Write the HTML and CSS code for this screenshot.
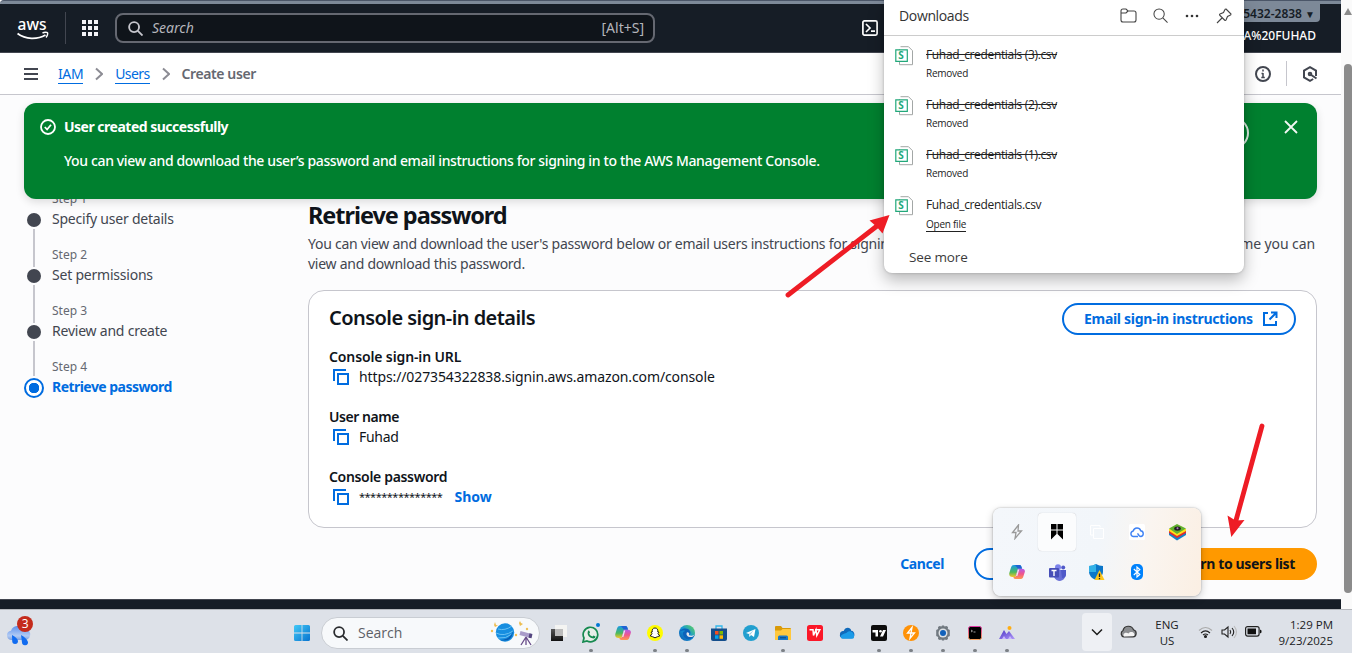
FILE: index.html
```html
<!DOCTYPE html>
<html lang="en">
<head>
<meta charset="utf-8">
<title>Create user | IAM</title>
<link rel="stylesheet" href="styles.css">
</head>
<body>
<svg class="defs" width="0" height="0">
  <defs>
    <symbol id="copy" viewBox="0 0 16 16"><path d="M1 12V1h12" /><path d="M5 5h10v10H5z"/></symbol>
    <symbol id="sheet" viewBox="0 0 19 20">
      <path d="M5.500 .7h8l4 4v14H4.500V3" fill="#fff" stroke="#a3a7a6"/><path d="M.8 3.800h11.500v11.500H.8z" fill="#fff" stroke="#21a87a" stroke-width="1.200"/>
      <text x="3.300" y="13.200" class="sheet-letter">S</text>
    </symbol>
    <symbol id="glass" viewBox="0 0 16 16"><circle cx="6.500" cy="6.500" r="5.300"/><path d="m10.500 10.500 5 5"/></symbol>
    <symbol id="chev" viewBox="0 0 8 14"><path d="m1 1.500 6 5.500-6 5.500"/></symbol>
    <linearGradient id="rainB" x1="0" y1="0" x2="0" y2="1"><stop offset="0" stop-color="#1798e8"/><stop offset=".6" stop-color="#4cba5c"/><stop offset="1" stop-color="#f6c52b"/></linearGradient>
    <linearGradient id="rainC" x1="0" y1="0" x2="0" y2="1"><stop offset="0" stop-color="#b45bea"/><stop offset=".5" stop-color="#f0568c"/><stop offset="1" stop-color="#ff9950"/></linearGradient>
    <linearGradient id="edgeG" x1="0" y1="1" x2="1" y2="0"><stop offset="0" stop-color="#0a55ab"/><stop offset=".5" stop-color="#1596d8"/><stop offset="1" stop-color="#66d94f"/></linearGradient>
    <linearGradient id="winG" x1="0" y1="0" x2="1" y2="1"><stop offset="0" stop-color="#42c9f7"/><stop offset="1" stop-color="#0873cf"/></linearGradient>
    <linearGradient id="cloudG" x1="0" y1="0" x2="0" y2="1"><stop offset="0" stop-color="#5f92ee"/><stop offset=".7" stop-color="#b3cbf3"/><stop offset="1" stop-color="#7b9fe0"/></linearGradient>
    <linearGradient id="termG" x1="0" y1="0" x2="0" y2="1"><stop offset="0" stop-color="#df37a3"/><stop offset="1" stop-color="#f8a05b"/></linearGradient>
    <linearGradient id="mtnG" x1="0" y1="0" x2="1" y2="1"><stop offset="0" stop-color="#4b35c6"/><stop offset="1" stop-color="#b199f8"/></linearGradient>
    <linearGradient id="darkG" x1="0" y1="0" x2="0" y2="1"><stop offset="0" stop-color="#555"/><stop offset="1" stop-color="#111"/></linearGradient>
    <symbol id="copilot" viewBox="0 0 16 16">
      <path d="M5 1h5.500c1.200 0 1.700.8 2 2l.5 1.800H9L6.500 13H3.500C1 13 -.2 11.500.3 9L2 3.500C2.500 1.800 3.600 1 5 1z" fill="url(#rainB)"/>
      <path d="M6 1h4.500c1.200 0 1.700.8 2 2l.5 1.800H9z" fill="#1f62d4"/>
      <path d="M9 4.800h4c2.500 0 3.200 1.500 2.800 3.200l-1.600 5c-.5 1.500-1.500 2-2.900 2H6.500c-1.600 0-2.200-1-2-2h2z" fill="url(#rainC)"/>
      <path d="M9 5.500h1.300l-2 6.500H7.100z" fill="#e9edf5"/>
    </symbol>
  </defs>
</svg>

<div class="screen">
  <div class="browser">
    <div class="page">
      <div class="accent-strip"></div>
      <header class="topnav">
        <svg class="aws" width="32" height="40" viewBox="0 -10 32 40"><text x="0.500" y="12" class="aws-word" textLength="29" lengthAdjust="spacingAndGlyphs">aws</text><path d="M.5 15.500c8 6.200 20 6.200 28 1.500" fill="none" stroke="#fff" stroke-width="1.900"/><path d="M25.500 15c2-1 4.500-.8 5-.2s0 3-1.500 4.700" fill="none" stroke="#fff" stroke-width="1.400"/></svg>
        <i class="nav-divider"></i>
        <svg class="apps" width="16" height="16" viewBox="0 0 16 16" fill="#f3f3f7"><path d="M0 0h4v4H0zM6 0h4v4H6zM12 0h4v4h-4zM0 6h4v4H0zM6 6h4v4H6zM12 6h4v4h-4zM0 12h4v4H0zM6 12h4v4H6zM12 12h4v4h-4z"/></svg>
        <div class="nav-search">
          <svg width="15" height="15" fill="none" stroke="#c6c6cd" stroke-width="2"><use href="#glass"/></svg>
          <em>Search</em><span>[Alt+S]</span>
        </div>
        <svg class="shell" width="16" height="16" viewBox="0 0 16 16" fill="none" stroke="#fff" stroke-width="1.700"><rect x=".9" y=".9" width="14.200" height="14.200" rx="1.500"/><path d="m4 4 4 4-4 4M9 11.200h4"/></svg>
        <div class="account"><div class="account-id">5432-2838 <small>▼</small></div><div class="account-name">A%20FUHAD</div></div>
      </header>
      <nav class="crumbs">
        <svg class="burger" width="14" height="12" viewBox="0 0 14 12" stroke="#424650" stroke-width="2"><path d="M0 1h14M0 6h14M0 11h14"/></svg>
        <a class="crumb-iam">IAM</a>
        <svg class="sep" width="8" height="14"><use href="#chev"/></svg>
        <a class="crumb-users">Users</a>
        <svg class="sep" width="8" height="14"><use href="#chev"/></svg>
        <b>Create user</b>
        <div class="crumb-tools">
          <svg width="16" height="16" viewBox="0 0 16 16" fill="none" stroke="#424650" stroke-width="2"><circle cx="8" cy="8" r="7"/><path d="M8 3.500v2M8 7v5M6.500 7.500H8M6.300 11.500h3.500" stroke-width="1.500"/></svg>
          <i></i>
          <svg width="16" height="16" viewBox="0 0 16 16" fill="none" stroke="#424650" stroke-width="2"><path d="M14 10V4.500L8 1.200 2 4.500v7l6 3.300 3.200-1.800"/><circle cx="8" cy="8" r="1.300"/><path d="m8.500 8.500 6 4"/></svg>
        </div>
      </nav>
      <main class="content">
        <ol class="steps">
          <li><i class="dot"></i><small>Step 1</small><span>Specify user details</span></li>
          <li><i class="dot"></i><small>Step 2</small><span>Set permissions</span></li>
          <li><i class="dot"></i><small>Step 3</small><span>Review and create</span></li>
          <li class="active"><i class="dot"></i><small>Step 4</small><span>Retrieve password</span></li>
        </ol>
        <section class="detail">
          <h1>Retrieve password</h1>
          <div class="lead"><div class="lead-row"><span>You can view and download the user's password below or email users instructions for signing in to the AWS Console.</span><span class="lead-end">time you can</span></div><div class="lead-two">view and download this password.</div></div>
          <div class="card">
            <div class="card-head"><h2>Console sign-in details</h2>
              <a class="btn email"><span>Email sign-in instructions</span><svg width="16" height="16" viewBox="0 0 16 16" fill="none" stroke="#006ce0" stroke-width="2"><path d="M6 2H2v12h12v-4M9 1.500h5.500V7M14 2 7.500 8.500"/></svg></a>
            </div>
            <div class="field"><b class="k-url">Console sign-in URL</b><p><svg class="copy"><use href="#copy"/></svg><span class="v-url">https://027354322838.signin.aws.amazon.com/console</span></p></div>
            <div class="field"><b class="k-user">User name</b><p><svg class="copy"><use href="#copy"/></svg><span class="v-user">Fuhad</span></p></div>
            <div class="field"><b class="k-pass">Console password</b><p><svg class="copy"><use href="#copy"/></svg><span class="v-pass">***************</span><a class="show">Show</a></p></div>
          </div>
          <div class="actions"><a class="cancel">Cancel</a><a class="btn secondary"></a><a class="btn primary">Return to users list</a></div>
        </section>
      </main>
      <footer class="console-foot"></footer>

      <div class="flash">
        <svg width="16" height="16" viewBox="0 0 16 16" fill="none" stroke="#fff" stroke-width="1.800"><circle cx="8" cy="8" r="7"/><path d="m4.800 8 2.300 2.500L11 5.800"/></svg>
        <div><b>User created successfully</b><p>You can view and download the user’s password and email instructions for signing in to the AWS Management Console.</p></div>
        <i class="flash-btn"></i>
        <svg class="close" width="14" height="14" viewBox="0 0 14 14" stroke="#f2f8f4" stroke-width="1.800"><path d="m1 1 12 12M13 1 1 13"/></svg>
      </div>
    </div>
    <div class="scrollbar"><i class="up"></i><i class="thumb"></i></div>
  </div>

  <div class="taskbar">
    <div class="weather"><svg width="28" height="32" viewBox="0 0 28 32"><path d="M5 24a4.700 4.700 0 0 1 0-9.300 7 7 0 0 1 12.500-1.500A4.500 4.500 0 0 1 20 24z" fill="url(#cloudG)"/><path d="M6 19q5.500 3 6 6a2.900 2.900 0 0 1-5.800 0zM15 19q5.500 3 7 7a3 3 0 0 1-6 .5z" fill="#126cf0"/><circle cx="19" cy="8" r="8" fill="#c42b1c"/><text x="15.800" y="12.200" class="badge-num">3</text></svg></div>
    <div class="task-mid">
      <div class="app"><svg width="16" height="16" viewBox="0 0 16 16" fill="url(#winG)"><path d="M1.500 0h6.100v7.600H0V1.500Q0 0 1.500 0zM8.400 0h6.100Q16 0 16 1.500v6.100H8.400zM0 8.400h7.600V16H1.500Q0 16 0 14.500zM8.400 8.400H16v6.100q0 1.500-1.500 1.500H8.400z"/></svg></div>
      <div class="tb-search"><svg width="15" height="15" fill="none" stroke="#292b2e" stroke-width="1.900"><use href="#glass"/></svg><span>Search</span>
        <svg width="44" height="28" viewBox="0 0 44 28"><circle cx="15" cy="13.500" r="9.200" fill="#168ee0"/><path d="M8 10q7 2 14-3M6 14q8 4 17-2M8 19q8 1 14-4" stroke="#69c1f3" fill="none"/><path d="M10 21q10 0 13-9-1 12-13 9" fill="#075bb3"/><path d="m5 3 1 3 2 .5-3 1.500-1-2zM30 2l1 2 2 1-3 2-1-3z" fill="#edbd4f"/><circle cx="2" cy="12" r="1.200" fill="#efbf55"/><circle cx="37" cy="10" r="1.200" fill="#efbf55"/><circle cx="26" cy="16" r="1.200" fill="#efbf55"/><path d="m30 14 11 3" stroke="#a99bc9" stroke-width="4"/><path d="m39 16.500 3 .6" stroke="#554680" stroke-width="4.500"/><path d="m36 18-5 8M36 18l5 8M36 18v8" stroke="#684b88" stroke-width="1.300"/></svg></div>
      <div class="app"><svg width="16" height="16" viewBox="0 0 16 16"><path d="M4 0h12v12H4z" fill="#f4f4f2"/><path d="M0 4h12v12H0z" fill="url(#darkG)"/><path d="M4 4h8v7H4z" fill="#bbb"/></svg></div>
      <div class="app on"><svg width="18" height="20" viewBox="0 -3 18 20"><path d="m1 16 1-4a7.300 7.300 0 1 1 3 3z" fill="#e8eee9" stroke="#168a50" stroke-width="1.700"/><path d="M6 5c1-1 1.500 0 2 1.500L7.200 7.700Q8 10 10.500 10.500l1-1 2 1c0 2-2 2.500-4 1.500C6 10.500 5 8 6 5z" fill="#168a50"/><circle cx="16" cy="-1" r="2" fill="#0078d4"/></svg></div>
      <div class="app"><svg width="16" height="16"><use href="#copilot"/></svg></div>
      <div class="app on"><svg width="16" height="16" viewBox="0 0 16 16"><circle cx="8" cy="8" r="8" fill="#fffc00"/><path d="M8 3c2.200 0 3 1.500 2.800 4l1.200.2-1 1.200q.8 2 2 2.300l-2.500 1L8 12.800l-2.500-1.100-2.500-1q1.200-.3 2-2.300L4 7.200 5.200 7C5 4.500 5.800 3 8 3z" fill="#fff" stroke="#222"/></svg></div>
      <div class="app on"><svg width="16" height="16" viewBox="0 0 16 16"><circle cx="8" cy="8" r="8" fill="url(#edgeG)"/><path d="M0 8c1-5 9-6 11-2 1 2 0 4-1 4 1 2 4 1.500 6-.5-3 7-11 6-12 0C3.500 7 5 6 6.500 6 4 5 1 5.500 0 8z" fill="#0b62ba"/><path d="M8 7.200c-1.500 2.500.5 5 4 4.800 1.500 0 2.500-.6 3.500-2C13 11 10 11 10 9.500c.8-1-.2-2.300-2-2.300z" fill="#dfe4eb"/></svg></div>
      <div class="app"><svg width="16" height="16" viewBox="0 0 16 16"><path d="M5 4V1h6v3" fill="none" stroke="#32b7eb" stroke-width="1.300"/><path d="M0 3.500h16V14q0 2-2 2H2q-2 0-2-2z" fill="#154e8c"/><path d="M4 6h3.500v3.500H4z" fill="#f25022"/><path d="M8.500 6H12v3.500H8.500z" fill="#7fba00"/><path d="M4 10.300h3.500v3.500H4z" fill="#00a4ef"/><path d="M8.500 10.300H12v3.500H8.500z" fill="#ffb900"/></svg></div>
      <div class="app"><svg width="16" height="16" viewBox="0 0 16 16"><circle cx="8" cy="8" r="8" fill="#229fcf"/><path d="m3 8 9.500-4L11 12l-3-2-1.500 2L6 9z" fill="#fff"/><path d="m6 9 5-4-4 5z" fill="#9bcce2"/></svg></div>
      <div class="app on"><svg width="16" height="16" viewBox="0 0 16 16"><path d="M0 2q0-1 1-1h5l1.500 2H15q1 0 1 1v5H0z" fill="#d99a08"/><path d="M0 5.500h6l1.500-1.500H16v11H0z" fill="#ffc83d"/><path d="M3 15v-3q0-1.500 1.500-1.500h7Q13 10.500 13 12v3z" fill="#1878c9"/><path d="M5 12.800h6" stroke="#07457d"/></svg></div>
      <div class="app"><svg width="16" height="16" viewBox="0 0 16 16"><rect width="16" height="16" rx="2.500" fill="#fb1728"/><path d="M2.500 4.800H6L6.500 10.500 9 4.800l.8 5.700L12.800 4.800H8" fill="none" stroke="#fff" stroke-width="1.500"/></svg></div>
      <div class="app"><svg width="16" height="12" viewBox="0 0 17 12"><path d="M1 8C1 4 4 4 5 4c1-4 7-5 8-.5 4 0 5 8 0 8H4C2 11.500.5 10 1 8z" fill="#0f69ba"/><path d="M2 10c0-3 5-3 7-5s7 0 7 4-1 3-5 3H4c-2 0-2-1-2-2z" fill="#1b9be8"/></svg></div>
      <div class="app on"><svg width="16" height="16" viewBox="0 0 16 16"><rect width="16" height="16" rx="2" fill="#0d0d0d"/><path d="M1.500 5H7v6.500H4.500V7.500h-3zM12 5h3l-3 6.500H9z" fill="#fff"/><circle cx="9.500" cy="6.300" r="1.300" fill="#fff"/></svg></div>
      <div class="app on"><svg width="16" height="16" viewBox="0 0 16 16"><circle cx="8" cy="8" r="8" fill="#ff9207"/><path d="M9 2.500 4.500 8H8l-1 5.500L11.500 8H8z" fill="none" stroke="#fff" stroke-width="1.300"/></svg></div>
      <div class="app on"><svg width="16" height="16" viewBox="0 0 16 16"><path d="m4.500 1 2 .5.500-1h2l.5 1 2-.5 1.500 1-.2 2 2 1v6l-2 1 .2 2-1.500 1-2-.5-.5 1H7l-.5-1-2 .5-1.500-1 .2-2-2-1V5l2-1L3 2z" fill="#717980"/><circle cx="8" cy="8" r="4.500" fill="#dde1e5"/><circle cx="8" cy="8" r="3" fill="#1261ba"/></svg></div>
      <div class="app on"><svg width="14" height="14" viewBox="0 0 14 14"><rect x=".5" y=".5" width="13" height="13" rx="2" fill="#000" stroke="url(#termG)"/><path d="m3 4 1.500 1L3 6M5.500 6h2" stroke="#ddd" fill="none" stroke-width=".7"/></svg></div>
      <div class="app on"><svg width="16" height="16" viewBox="0 0 16 16"><path d="M0 14 5 5l2.500 4L10 6l6 8z" fill="url(#mtnG)"/><path d="m3 14 2-3 2 3zM9 14l2-3 2 3z" fill="#c8b8ff"/><circle cx="10.500" cy="3" r="2" fill="#ffad13"/></svg></div>
    </div>
    <div class="sys">
      <div class="chev-btn"><svg width="12" height="8" viewBox="0 0 12 8" fill="none" stroke="#1c1c1c" stroke-width="1.500"><path d="m1 1.500 5 5 5-5"/></svg></div>
      <svg class="cloud" width="17" height="13" viewBox="0 0 17 13"><path d="M4 12a3.500 3.500 0 0 1-1-6.500 5.500 5.500 0 0 1 10.500-.7A3.700 3.700 0 0 1 13 12z" fill="#8b8d90" stroke="#333" stroke-width="1.200"/><path d="M4 11.500c-2-3 2-5 4.500-3C11 5 16 8 14 11z" fill="#f4f4f4"/></svg>
      <div class="lang"><span>ENG</span><span>US</span></div>
      <svg class="wifi" width="15" height="12" viewBox="0 0 15 12" fill="none" stroke="#222" stroke-width="1.100"><path d="M1 4.500q6.500-6 13 0" stroke="#aaa"/><path d="M3 7q4.500-4.200 9 0M5 9q2.500-2 5 0"/><circle cx="7.500" cy="10.500" r="1" fill="#222"/></svg>
      <svg class="sound" width="17" height="14" viewBox="0 0 17 14" fill="none" stroke="#222" stroke-width="1.100"><path d="M1 5h2.500L7 2v10L3.500 9H1zM9 5q1.500 2 0 4M11 3q3.500 4 0 8"/><path d="M13 1q5 6 0 12" stroke="#bbb"/></svg>
      <svg class="battery" width="17" height="11" viewBox="0 0 17 11"><rect x=".6" y=".6" width="13.500" height="9.500" rx="2" fill="none" stroke="#222" stroke-width="1.200"/><path d="M2.500 2.500h8.500v5.700H2.500zM15 3.500l1.500 1v2l-1.500 1z" fill="#111"/></svg>
      <div class="clock"><span>1:29 PM</span><span class="date">9/23/2025</span></div>
    </div>
  </div>

  <aside class="downloads">
    <div class="dl-head"><span>Downloads</span>
      <svg class="folder" width="17" height="15" viewBox="0 0 17 15"><path d="M1 3q0-2 2-2h3l2 2h6q2 0 2 2v7q0 2-2 2H3q-2 0-2-2zM1 5h5l2-2"/></svg>
      <svg class="dl-find" width="15" height="15" viewBox="0 0 16 16"><circle cx="6.500" cy="6.500" r="5.500"/><path d="m10.500 10.500 5 5"/></svg>
      <svg class="more" width="14" height="4" viewBox="0 0 14 4"><g fill="#333" stroke="none"><circle cx="2" cy="2" r="1.300"/><circle cx="7" cy="2" r="1.300"/><circle cx="12" cy="2" r="1.300"/></g></svg>
      <svg class="pin" width="16" height="16" viewBox="0 0 16 16"><path d="m10 1 5 5q0 1-1 1.300L11.500 8.500 10 12q-.5 1-1.500 0L4 7.500q-1-1 0-1.500l3.500-1.500L8.700 2q.3-1 1.300-1zM6 10 1 15"/></svg>
    </div>
    <div class="dl-item"><svg width="19" height="20"><use href="#sheet"/></svg><div><s>Fuhad_credentials (3).csv</s><small>Removed</small></div></div>
    <div class="dl-item"><svg width="19" height="20"><use href="#sheet"/></svg><div><s>Fuhad_credentials (2).csv</s><small>Removed</small></div></div>
    <div class="dl-item"><svg width="19" height="20"><use href="#sheet"/></svg><div><s>Fuhad_credentials (1).csv</s><small>Removed</small></div></div>
    <div class="dl-item"><svg width="19" height="20"><use href="#sheet"/></svg><div><span>Fuhad_credentials.csv</span><small class="open">Open file</small></div></div>
    <div class="see-more">See more</div>
  </aside>

  <div class="tray">
    <div><svg width="12" height="16" viewBox="0 0 12 16" fill="none" stroke="#999" stroke-width="1.300"><path d="M7.500 1 1.500 8.500H5L4 14.500 10.500 7H7z"/></svg></div>
    <div><p class="tile"><svg width="12" height="16" viewBox="0 0 12 16"><path d="M0 0h5.500v5.500H0zM6.500 0H12v5.500H6.500zM0 6.500h5.500V10L0 15.500zM6.500 6.500H12v9L6.500 10z"/></svg></p></div>
    <div><svg width="14" height="14" viewBox="0 0 14 14" fill="none" stroke="#fff"><path d="M.5 10V.5H10v2M3.500 3.500h10v10h-10zM.5 10h3"/></svg></div>
    <div><svg width="16" height="16" viewBox="0 0 16 16"><rect width="16" height="16" rx="1.500" fill="#fff"/><path d="M9 12.500H4.200a2.800 2.800 0 0 1 0-5.500 3.900 3.900 0 0 1 7.500-.2 2.900 2.900 0 0 1 .3 5.700q-1.200 0-2-1L8.500 9.300" fill="none" stroke="#3f82f4" stroke-width="1.400"/></svg></div>
    <div><svg width="17" height="17" viewBox="0 0 17 17"><path d="m0 11 8 5.500 9-5.500V8H0z" fill="#1681c9"/><path d="m0 9 8 5 9-5V7H0z" fill="#e22b2f"/><path d="m0 7 8 5 9-5V5H0z" fill="#ffe11a"/><path d="M0 4.500 8 0l9 4.500-9 5.500z" fill="#65b32e"/><ellipse cx="8.500" cy="4.600" rx="3.300" ry="2.200" fill="#222"/><circle cx="8.500" cy="4.300" r="1" fill="#b474c5"/></svg></div>
    <div><svg width="16" height="16"><use href="#copilot"/></svg></div>
    <div><svg width="17" height="17" viewBox="0 0 17 17"><circle cx="9" cy="3.200" r="3" fill="#7b83eb"/><circle cx="14.200" cy="3.500" r="2" fill="#5059c9"/><path d="M5 6h11v6q0 4-5 5-4 0-6-4z" fill="#6970d6"/><path d="M12 6h5v5q0 3-4 3z" fill="#505ac9"/><rect x="0" y="4" width="10" height="9.500" rx="1" fill="#464eb8"/><path d="M2.500 6.500h5M5 6.500V12" stroke="#fff" stroke-width="1.400"/></svg></div>
    <div><svg width="16" height="17" viewBox="0 0 16 17"><path d="M7 0q3 2 7 2v6q0 5-7 8-7-3-7-8V2q4 0 7-2z" fill="#0b76c9"/><path d="M7 0v8H0V2q4 0 7-2z" fill="#31b1e7"/><path d="m10.500 6 5 10h-10z" fill="#ffc619"/><path d="M10.500 9.500v3.500M10.500 14v1.300" stroke="#222" stroke-width="1.300"/></svg></div>
    <div><svg width="12" height="16" viewBox="0 0 12 16"><rect width="12" height="16" rx="5" fill="#0082fc"/><path d="m2.800 5 6 5.500L6 13V3l2.800 2.500-6 5.500" fill="none" stroke="#fff" stroke-width="1.200"/></svg></div>
  </div>

  <svg class="arrows" width="1352" height="653" viewBox="0 0 1352 653">
    <g stroke="#ee1c25" stroke-width="4.800" stroke-linecap="round"><path d="m788 295 89-69M1262 426l-27 98"/></g>
    <path d="m889.500 215-20 5.500 7 6 6 7zM1231.300 537l-3.800-21.500 8 5 9-.5z" fill="#ee1c25"/>
  </svg>
</div>
</body>
</html>
```
FILE: styles.css
```css
* { box-sizing: border-box; }
body { margin: 0; font-family: "Noto Sans", "Open Sans", sans-serif; font-size: 14px; line-height: 20px; color: #0f141a; }
p, h1, h2, ol { margin: 0; padding: 0; }
ol { list-style: none; }
svg { display: block; flex: none; }
b, h1, h2 { font-weight: 600; }
.defs { position: absolute; }
.screen { position: relative; width: 1352px; height: 653px; overflow: hidden; display: flex; flex-direction: column; white-space: nowrap; background: #fff; }
.browser { height: 609px; display: flex; }
.page { position: relative; width: 1341px; display: flex; flex-direction: column; background: #fcfcfd; }

.accent-strip { height: 4px; background: #7d8998; border-top: 1px solid #4b5668; border-top-left-radius: 5px; }
.topnav { height: 49px; background: #161d26; border-bottom: 1px solid #424650; display: flex; align-items: center; padding-left: 17px; }
.aws-word { font: 500 17px "Noto Sans", sans-serif; fill: #fff; }
.nav-divider { width: 1px; height: 32px; background: #424650; margin-left: 16px; }
.apps { margin-left: 16px; }
.nav-search { width: 540px; height: 30px; margin-left: 17px; border: 2px solid #656871; border-radius: 8px; background: #0f141a; display: flex; align-items: center; padding: 0 9px 0 11px; color: #b4b4bb; }
.nav-search em { margin-left: 9px; flex: 1; }
.shell { margin-left: 207px; }
.account { margin-left: auto; align-self: stretch; width: 99px; margin-right: 20px; text-align: right; color: #fff; font-size: 12px; }
.account-id { height: 18px; line-height: 19px; background: #7d8998; color: #161d26; border-radius: 0 0 4px 4px; padding-right: 5px; font-weight: 600; margin-right: 1px; }
.account-id small { font-size: 10px; }
.account-name { padding: 4px 5px 0 0; font-weight: 500; }

.crumbs { height: 42px; border-bottom: 1px solid #c6c6cd; background: #fff; display: flex; align-items: center; padding-left: 24px; }
.crumbs a { color: #006ce0; border-bottom: 1px solid #006ce0; line-height: 18px; margin-top: 2px; }
.crumb-iam { margin-left: 20px; letter-spacing: -.4px; }
.crumb-users { letter-spacing: -.6px; }
.sep { margin: 0 12px; fill: none; stroke: #8c8c94; stroke-width: 2; }
.crumbs b { color: #656871; letter-spacing: -.4px; }
.crumb-tools { display: flex; align-items: center; gap: 15px; margin: 0 23px 0 auto; }
.crumb-tools i { width: 1px; height: 25px; background: #c6c6cd; }

.content { display: flex; height: 504px; padding: 94px 24px 0; }
.steps { width: 284px; }
.steps li { position: relative; height: 56px; padding-left: 28px; color: #424650; }
.steps small, .steps span { display: block; }
.steps small { font-size: 12px; color: #656871; }
.steps span { letter-spacing: -.22px; }
.steps .dot { position: absolute; left: 3px; top: 24px; width: 14px; height: 14px; border-radius: 50%; background: #424650; }
.steps .dot::after { content: ""; position: absolute; left: 6px; top: 16px; width: 2px; height: 38px; background: #c6c6cd; }
.steps li:nth-child(3) .dot::after { height: 35px; }
.steps .active .dot { left: 0; top: 21px; width: 20px; height: 20px; background: radial-gradient(#006ce0 5px, #fff 5.500px); border: 2px solid #006ce0; }
.steps .active .dot::after { display: none; }
.steps .active span { color: #006ce0; font-weight: 700; letter-spacing: -.54px; }
.detail { flex: 1; }
h1 { font-size: 23.500px; line-height: 30px; margin-top: 11px; letter-spacing: -.8px; font-weight: 700; letter-spacing: -1.050px; }
.lead { color: #424650; margin-top: 4px; letter-spacing: -.26px; }
.lead-row { display: flex; }
.lead-end { margin-left: auto; padding-right: 2px; letter-spacing: -.1px; }
.card { margin-top: 16px; height: 238px; border: 1px solid #c6c6cd; border-radius: 16px; background: #fff; padding: 12px 20px; }
.card-head { display: flex; justify-content: space-between; height: 32px; }
h2 { font-size: 20px; line-height: 30px; letter-spacing: -.55px; }
.btn { height: 32px; border-radius: 16px; border: 2px solid #006ce0; color: #006ce0; font-weight: 700; letter-spacing: -.3px; display: flex; align-items: center; }
.email { width: 234px; padding: 0 16px 0 20px; justify-content: space-between; }
.field { margin-top: 12px; height: 48px; }
.field b, .field p { display: flex; align-items: center; height: 20px; }
.k-url { letter-spacing: -.12px; }
.k-user { letter-spacing: -.45px; }
.k-pass { letter-spacing: -.33px; }
.v-url { letter-spacing: -.11px; }
.v-user { letter-spacing: -.3px; }
.v-pass { font-size: 11px; letter-spacing: -.5px; }
.copy { width: 16px; height: 16px; margin: 0 10px 0 4px; fill: none; stroke: #006ce0; stroke-width: 2; }
.show { color: #006ce0; font-weight: 700; margin-left: 12px; }
.actions { display: flex; align-items: center; justify-content: flex-end; margin-top: 20px; color: #006ce0; font-weight: 700; }
.cancel { margin-right: 30px; letter-spacing: -.4px; }
.secondary { width: 160px; background: #fff; }
.primary { width: 175px; margin-left: 8px; background: #f90; border-color: #f90; color: #0f141a; justify-content: flex-end; padding-right: 20px; letter-spacing: -.35px; }
.console-foot { height: 10px; background: #161d26; border-top: 1px solid #424650; }

/* The notification floats over the scrolled page */
.flash { position: absolute; left: 24px; top: 103px; width: 1293px; height: 96px; border-radius: 12px; background: #00802f; color: #fff; display: flex; padding: 14px 16px; box-shadow: 0 3px 8px #0002; }
.flash svg { margin-top: 2px; }
.flash div { margin-left: 8px; flex: 1; }
.flash b { display: block; font-weight: 700; letter-spacing: -.5px; }
.flash p { margin-top: 14px; font-weight: 500; letter-spacing: -.365px; }
.flash-btn { width: 80px; height: 32px; border: 2px solid #dcebe1; border-radius: 16px; margin-right: 35px; }
.flash .close { margin: 3px 3px 0 0; }

.scrollbar { width: 11px; background: #fafafa; padding: 8px 0 0 3px; }
.scrollbar i { display: block; }
.up { border: 4px solid transparent; border-bottom: 7px solid #8b8b8b; border-top: 0; width: 8px; }
.thumb { width: 8px; height: 529px; margin-top: 49px; background: #8b8b8b; border-radius: 4px; }

.taskbar { height: 44px; background: #dde1e8; border-top: 1px solid #b4b7bc; display: flex; font-family: "Open Sans", "Noto Sans", sans-serif; color: #202124; }
.weather { width: 286px; padding: 6px 0 0 6px; }
.badge-num { font: 12px "Open Sans", sans-serif; fill: #fff; }
.task-mid { display: flex; width: 738px; }
.app { position: relative; width: 32px; height: 46px; display: flex; align-items: center; justify-content: center; }
.app.on::after { content: ""; position: absolute; left: 14px; top: 39px; width: 4px; height: 3px; border-radius: 2px; background: #7c8086; }
.tb-search { width: 219px; height: 32px; margin: 7px 3px 0; border-radius: 16px; border: 1px solid #c9cdd3; background: #f7f9fb; display: flex; align-items: center; padding: 0 5px 0 11px; color: #5d6066; }
.tb-search span { margin-left: 10px; flex: 1; }
.sys { display: flex; align-items: center; margin-left: 58px; width: 270px; font-size: 12px; }
.chev-btn { width: 30px; height: 38px; border-radius: 4px; background: #eef0f4; display: flex; align-items: center; justify-content: center; }
.cloud { margin-left: 8px; }
.lang { width: 40px; margin-left: 10px; text-align: center; padding-top: 2px; }
.lang span, .clock span { display: block; line-height: 16px; font-size: 11.500px; }
.wifi { margin-left: 11px; }
.sound { margin-left: 8px; }
.battery { margin-left: 7px; }
.clock { margin-left: auto; margin-right: 19px; text-align: right; padding-top: 2px; }

/* Browser downloads flyout */
.downloads { position: absolute; left: 884px; top: 0; width: 360px; height: 273px; background: #fff; border-radius: 0 0 8px 8px; box-shadow: 0 7px 16px #0004, 0 0 3px #0003; font-family: "Open Sans", "Noto Sans", sans-serif; color: #222; }
.dl-head { height: 36px; border-bottom: 1px solid #ccc; display: flex; align-items: center; padding: 0 12px 4px 15px; color: #333; }
.dl-head span { flex: 1; letter-spacing: -.35px; }
.dl-head svg { fill: none; stroke: #454545; stroke-width: 1.100; }
.dl-find { margin-left: 16px; }
.more { margin-left: 17px; }
.pin { margin-left: 17px; }
.dl-item { height: 50px; display: flex; gap: 12px; padding: 10px 0 0 11px; font-size: 12px; line-height: 18px; }
.dl-item div > * { display: block; width: max-content; letter-spacing: -.34px; }
.dl-item small { font-size: 10px; line-height: 14px; margin-top: 2px; letter-spacing: -.25px; }
.dl-item .open { border-bottom: 1px solid #222; line-height: 14px; margin-top: 3px; }
.dl-item div > small { letter-spacing: -.25px; }
.sheet-letter { font: 700 10px "Open Sans", sans-serif; fill: #21a87a; }
.see-more { padding: 11px 0 0 25px; font-weight: 500; font-size: 13.500px; letter-spacing: -.15px; color: #3b3b3b; }

/* Hidden notification-area icons */
.tray { position: absolute; left: 993px; top: 508px; width: 208px; height: 88px; padding: 4px; border-radius: 8px; background: linear-gradient(100deg, #f4f7fb 0%, #f2f6fa 50%, #faf5f0 72%, #fbefe3 100%); box-shadow: 0 3px 9px #0003, 0 0 2px #0005; display: grid; grid-template-columns: repeat(5, 40px); grid-template-rows: 40px 40px; }
.tray > div { display: flex; align-items: center; justify-content: center; }
.tile { width: 38px; height: 38px; border-radius: 4px; background: #fbfcfd; box-shadow: 0 0 1px #0004; display: flex; align-items: center; justify-content: center; }
.arrows { position: absolute; left: 0; top: 0; pointer-events: none; }
```
